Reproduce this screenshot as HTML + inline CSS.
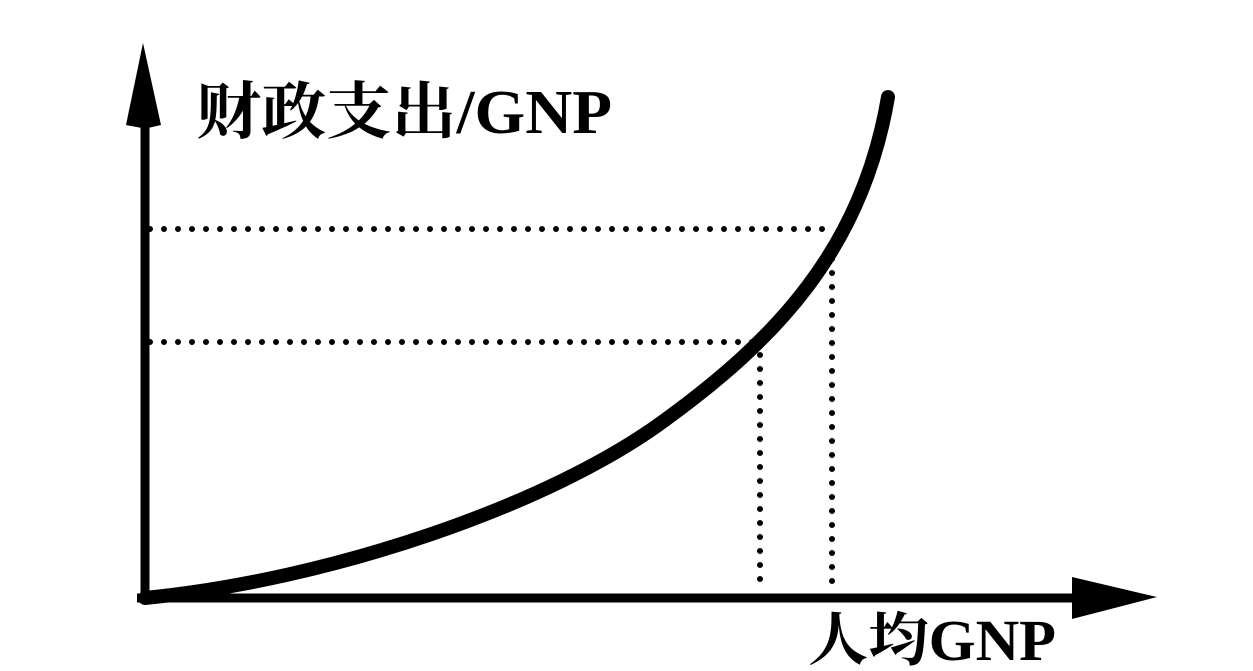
<!DOCTYPE html>
<html><head><style>
html,body{margin:0;padding:0;background:#fff;width:1253px;height:671px;overflow:hidden}
svg{display:block}
</style></head><body>
<svg width="1253" height="671" viewBox="0 0 1253 671" xmlns="http://www.w3.org/2000/svg">
<g fill="none" stroke="#000">
<line x1="145" y1="110" x2="145" y2="603" stroke-width="9"/>
<line x1="137" y1="598" x2="1090" y2="598" stroke-width="9"/>
<path d="M145 598 C 330 580, 550 505, 665 420 C 775 340, 862 250, 888 97" stroke-width="14" stroke-linecap="round"/>
<g stroke-width="6" stroke-linecap="round" stroke-dasharray="0 14">
<line x1="150" y1="229" x2="835" y2="229"/>
<line x1="150" y1="342" x2="755" y2="342"/>
<line x1="760" y1="355" x2="760" y2="585"/>
<line x1="832" y1="245" x2="832" y2="592"/>
</g>
</g>
<path d="M143 43 L161 125 L148 128 L142 128 L126 125 Z" fill="#000"/>
<path d="M1072 577 L1157 597 L1072 619 Z" fill="#000"/>
<text x="196" y="133" font-family="'Liberation Serif','Noto Serif CJK SC',serif" font-weight="bold" font-size="62" textLength="416" lengthAdjust="spacingAndGlyphs">财政支出/GNP</text>
<text x="808" y="660" font-family="'Liberation Serif','Noto Serif CJK SC',serif" font-weight="bold" font-size="58" textLength="248" lengthAdjust="spacingAndGlyphs">人均GNP</text>
</svg>
</body></html>
